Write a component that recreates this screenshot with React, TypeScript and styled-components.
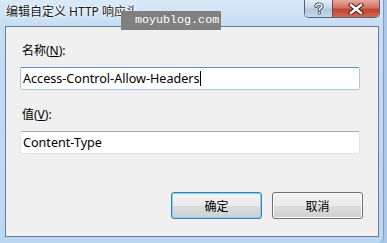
import styled, { createGlobalStyle } from "styled-components";

const GlobalStyle = createGlobalStyle`
    html, body {
        margin: 0;
        padding: 0;
        width: 387px;
        height: 243px;
        overflow: hidden;
        background: #a9c8e8;
    }
    * {
        box-sizing: border-box;
    }
`

const uiFont = `"Noto Sans", "Noto Sans CJK SC", sans-serif`

const Window = styled.div`
    position: relative;
    width: 384px;
    height: 243px;
    display: flex;
    flex-direction: column;
    background: linear-gradient(180deg, #d9e9f8 0px, #c6ddf4 26px, #bcd7f1 100%);
    border-right: 1px solid #7f9db9;
    border-bottom-right-radius: 6px;
`

const TitleBar = styled.div`
    height: 26px;
    display: flex;
    align-items: flex-start;
    padding-left: 6px;
`

const Title = styled.span`
    font-family: ${uiFont};
    font-size: 12px;
    line-height: 12px;
    margin-top: 6px;
    color: #1b1b1b;
    text-shadow: 0 0 6px #ffffff, 0 0 3px #ffffff;
`

const CaptionButtons = styled.div`
    margin-left: auto;
    margin-right: 3px;
    display: flex;
    height: 18px;
    border: 1px solid #4f6580;
    border-top: none;
    border-radius: 0 0 5px 5px;
    overflow: hidden;
`

const CaptionButton = styled.div<{ $close?: boolean }>`
    width: ${p => (p.$close ? "47px" : "27px")};
    display: flex;
    align-items: center;
    justify-content: center;
    border-left: ${p => (p.$close ? "1px solid #7a4a44" : "none")};
    background: ${p =>
        p.$close
            ? "linear-gradient(180deg, #e4a99c 0%, #d47362 45%, #c24232 55%, #d5694f 100%)"
            : "linear-gradient(180deg, #e3edf7 0%, #c9d9ea 45%, #b3c7dd 55%, #c6d8ea 100%)"};
`

const ClientArea = styled.div`
    flex: 1;
    margin: 0 4px 6px 5px;
    background: #f0f0f0;
    border: 1px solid #6b7d92;
    padding: 15px 18px 0 14px;
    display: flex;
    flex-direction: column;
`

const FieldLabel = styled.label`
    font-family: ${uiFont};
    font-size: 12px;
    line-height: 18px;
    height: 18px;
    padding-left: 2px;
    color: #000;
    u {
        text-decoration: underline;
    }
`

const TextBox = styled.div<{ $focused?: boolean }>`
    margin-top: 7px;
    margin-bottom: 16px;
    height: 23px;
    background: #fff;
    border: 1px solid ${p => (p.$focused ? "#a9c7e3" : "#e2e3ea")};
    border-top-color: ${p => (p.$focused ? "#5794bf" : "#abadb3")};
    border-radius: 2px;
    font-family: ${uiFont};
    font-size: 12.6px;
    line-height: 21px;
    padding-left: 2px;
    color: #000;
    display: flex;
    align-items: center;
`

const Caret = styled.span`
    display: inline-block;
    width: 1px;
    height: 15px;
    background: #000;
`

const ButtonRow = styled.div`
    margin-top: auto;
    margin-bottom: 17px;
    display: flex;
    justify-content: flex-end;
    gap: 10px;
    margin-right: -3px;
`

const DialogButton = styled.button<{ $default?: boolean }>`
    width: 91px;
    height: 27px;
    padding: 0;
    border-radius: 3px;
    border: 1px solid ${p => (p.$default ? "#3c7fb1" : "#707070")};
    box-shadow: inset 0 0 0 1px ${p => (p.$default ? "#7ed3f4" : "#fcfcfc")};
    background: linear-gradient(180deg, #f2f2f2 0%, #ebebeb 50%, #dddddd 51%, #cfcfcf 100%);
    font-family: ${uiFont};
    font-size: 12px;
    color: #000;
`

const Watermark = styled.div`
    position: absolute;
    left: 121px;
    top: 11px;
    width: 100px;
    height: 19px;
    background: #808080;
    color: #fff;
    font-family: "Liberation Mono", monospace;
    font-size: 11.7px;
    line-height: 19px;
    padding-left: 14px;
    white-space: nowrap;
`

const HelpIcon = () => (
    <svg width="12" height="13" viewBox="0 0 12 13">
        <path
            d="M3 4.2 C3 1.6 9 1.4 9 4.2 C9 6 6.3 6 6.3 8"
            fill="none"
            stroke="#2f4660"
            strokeWidth="3.4"
            strokeLinecap="round"
        />
        <path
            d="M3 4.2 C3 1.6 9 1.4 9 4.2 C9 6 6.3 6 6.3 8"
            fill="none"
            stroke="#ffffff"
            strokeWidth="1.6"
            strokeLinecap="round"
        />
        <circle cx="6.3" cy="11" r="1.7" fill="#2f4660" />
        <circle cx="6.3" cy="11" r="0.9" fill="#ffffff" />
    </svg>
)

const CloseIcon = () => (
    <svg width="16" height="12" viewBox="0 0 16 12">
        <path d="M3 2 L13 10 M13 2 L3 10" stroke="#4b1f1a" strokeWidth="4.4" strokeLinecap="square" />
        <path d="M3 2 L13 10 M13 2 L3 10" stroke="#ffffff" strokeWidth="2.4" strokeLinecap="square" />
    </svg>
)

const App = () => {
    return <>
        <GlobalStyle />
        <Window>
            <TitleBar>
                <Title>编辑自定义 HTTP 响应头</Title>
                <CaptionButtons>
                    <CaptionButton><HelpIcon /></CaptionButton>
                    <CaptionButton $close><CloseIcon /></CaptionButton>
                </CaptionButtons>
            </TitleBar>
            <ClientArea>
                <FieldLabel>名称(<u>N</u>):</FieldLabel>
                <TextBox $focused>Access-Control-Allow-Headers<Caret /></TextBox>
                <FieldLabel>值(<u>V</u>):</FieldLabel>
                <TextBox>Content-Type</TextBox>
                <ButtonRow>
                    <DialogButton $default>确定</DialogButton>
                    <DialogButton>取消</DialogButton>
                </ButtonRow>
            </ClientArea>
            <Watermark>moyublog.com</Watermark>
        </Window>
    </>
}

export default App;
